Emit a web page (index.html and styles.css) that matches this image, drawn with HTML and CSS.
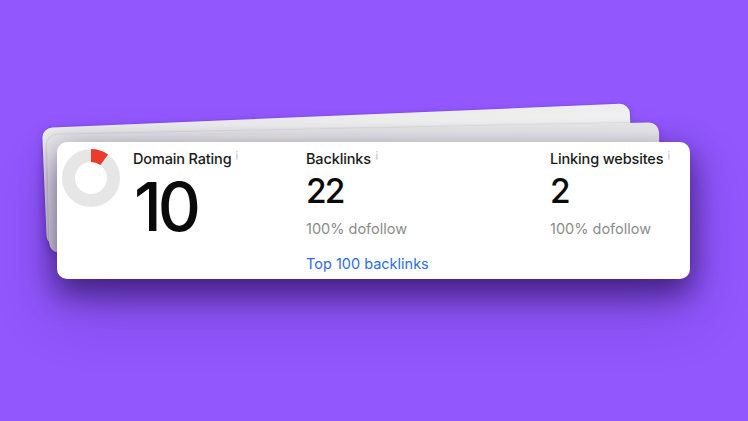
FILE: index.html
```html
<!DOCTYPE html>
<html lang="en">
<head>
<meta charset="utf-8">
<title>Domain overview</title>
<link rel="stylesheet" href="styles.css">
</head>
<body>
<div class="stage">
  <div class="ghost ghost-back"></div>
  <div class="ghost ghost-mid"></div>
  <div class="card">
    <svg class="donut" width="58" height="58" viewBox="0 0 58 58">
      <circle cx="29" cy="29" r="22.5" fill="none" stroke="#e6e6e6" stroke-width="13"/>
      <circle cx="29" cy="29" r="22.5" fill="none" stroke="#ee3a2a" stroke-width="13" stroke-dasharray="14.1 200" transform="rotate(-90 29 29)"/>
    </svg>
    <div class="col col-dr">
      <div class="title">Domain Rating<svg class="info" width="4" height="9" viewBox="0 0 4 9"><rect x="1.3" y="0" width="1.2" height="1.3" fill="#c4c4c4"/><rect x="1.3" y="2.5" width="1.2" height="6" fill="#c4c4c4"/></svg></div>
      <div class="big">10</div>
    </div>
    <div class="col col-bl">
      <div class="title">Backlinks<svg class="info" width="4" height="9" viewBox="0 0 4 9"><rect x="1.3" y="0" width="1.2" height="1.3" fill="#c4c4c4"/><rect x="1.3" y="2.5" width="1.2" height="6" fill="#c4c4c4"/></svg></div>
      <div class="num">22</div>
      <div class="sub">100% dofollow</div>
      <a class="link" href="#">Top 100 backlinks</a>
    </div>
    <div class="col col-lw">
      <div class="title">Linking websites<svg class="info" width="4" height="9" viewBox="0 0 4 9"><rect x="1.3" y="0" width="1.2" height="1.3" fill="#c4c4c4"/><rect x="1.3" y="2.5" width="1.2" height="6" fill="#c4c4c4"/></svg></div>
      <div class="num">2</div>
      <div class="sub">100% dofollow</div>
    </div>
  </div>
</div>
</body>
</html>
```
FILE: styles.css
```css
html, body {
  margin: 0;
  padding: 0;
}
body {
  width: 748px;
  height: 421px;
  overflow: hidden;
  background: #9257fd;
  font-family: Inter, "Liberation Sans", sans-serif;
  color: #1e1e1e;
}
.stage {
  position: relative;
  padding: 142px 0 0 57px;
}
.ghost {
  position: absolute;
  background: linear-gradient(#ededed, #f9f9f9 30%, #f6f6f6);
  border-radius: 10px;
  box-shadow: 0 0 2px rgba(0, 0, 0, 0.2), 0 4px 10px rgba(40, 10, 90, 0.18);
  transform-origin: top left;
}
.ghost-back {
  left: 42px;
  top: 128px;
  width: 588px;
  height: 118px;
  transform: rotate(-2.4deg);
}
.ghost-mid {
  left: 47px;
  top: 135px;
  width: 612px;
  height: 118px;
  transform: rotate(-1.2deg);
  background: linear-gradient(#e9e9e9, #f7f7f7 30%, #f3f3f3);
}
.card {
  position: relative;
  width: 633px;
  height: 137px;
  box-sizing: border-box;
  background: #fff;
  border-radius: 10px;
  box-shadow: 0 12px 30px 2px rgba(28, 8, 66, 0.62), 0 30px 60px rgba(40, 10, 90, 0.25);
  display: flex;
  align-items: flex-start;
  padding: 7px 0 0 5px;
}
.donut {
  flex: none;
  margin-right: 13px;
}
.col {
  display: flex;
  flex-direction: column;
  align-items: flex-start;
  padding-top: 1px;
}
.col-dr { width: 173px; }
.col-bl { width: 244px; }
.col-lw { flex: 1; }
.title {
  font-size: 14.5px;
  line-height: 18px;
  font-weight: 550;
  letter-spacing: -0.15px;
  display: flex;
  align-items: flex-start;
  color: #1a1a1a;
}
.info {
  margin: 1px 0 0 4px;
}
.big {
  font-size: 67px;
  line-height: 1;
  font-weight: 500;
  letter-spacing: -4px;
  color: #0a0a0a;
  margin-top: 5px;
  margin-left: 1px;
}
.num {
  font-size: 33.5px;
  line-height: 1;
  font-weight: 500;
  letter-spacing: -2px;
  color: #0a0a0a;
  margin-top: 7px;
}
.sub {
  font-size: 14.5px;
  line-height: 18px;
  color: #8b8b8b;
  margin-top: 11px;
}
.link {
  font-size: 14.5px;
  line-height: 18px;
  color: #2d6ddf;
  text-decoration: none;
  margin-top: 17px;
}
```
